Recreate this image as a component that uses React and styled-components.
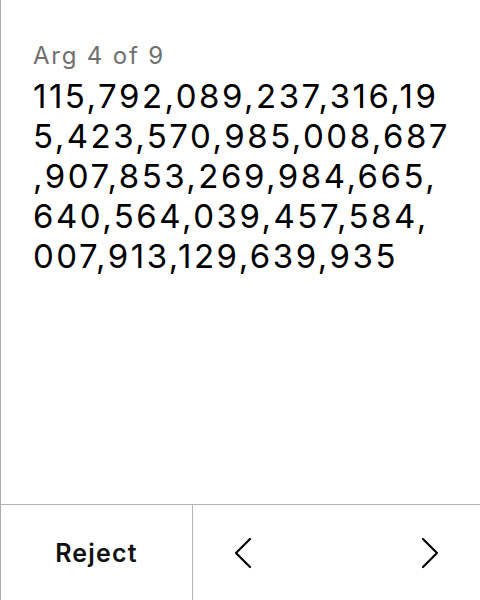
import React from 'react';
import styled, { createGlobalStyle } from 'styled-components';

const GlobalStyle = createGlobalStyle`
  html, body {
    margin: 0;
    padding: 0;
    background: #fff;
  }
  body {
    font-family: Inter, "Noto Sans", sans-serif;
    -webkit-font-smoothing: antialiased;
  }
`

const Screen = styled.div`
  width: 480px;
  height: 600px;
  box-sizing: border-box;
  border-left: 1px solid #aaa;
  display: flex;
  flex-direction: column;
  background: #fff;
`
const Body = styled.div`
  flex: 1;
  padding: 40px 32px 0 32px;
`
const Label = styled.div`
  font-size: 24px;
  line-height: 32px;
  color: #707070;
  letter-spacing: 1.8px;
`
const Value = styled.div`
  margin-top: 4px;
  font-size: 33px;
  line-height: 40px;
  color: #000;
  letter-spacing: 2.5px;
`
const ValueLine = styled.span`
  display: block;
  white-space: nowrap;
`
const Footer = styled.div`
  box-sizing: border-box;
  height: 96px;
  border-top: 1px solid #b4b4b4;
  display: grid;
  grid-template-columns: 192px 1fr;
`
const RejectButton = styled.button`
  border: none;
  border-right: 1px solid #b4b4b4;
  background: none;
  font-family: Inter, sans-serif;
  font-weight: 600;
  font-size: 25px;
  letter-spacing: 1.2px;
  color: #111;
  cursor: pointer;
`
const Nav = styled.div`
  display: flex;
  align-items: center;
  justify-content: space-between;
  padding: 0 34px;
`
const NavButton = styled.button`
  border: none;
  background: none;
  padding: 0;
  width: 32px;
  height: 40px;
  display: flex;
  align-items: center;
  justify-content: center;
  cursor: pointer;
`

const Chevron = ({ dir }) => (
  <svg width="18" height="32" viewBox="0 0 18 32" fill="none">
    <path
      d={dir === 'left' ? 'M16 2 L2 16 L16 30' : 'M2 2 L16 16 L2 30'}
      stroke="#000"
      strokeWidth="2.2"
      strokeLinecap="round"
      strokeLinejoin="round"
    />
  </svg>
)

// the device wraps the raw value character by character at these points
const value = '115,792,089,237,316,195,423,570,985,008,687,907,853,269,984,665,640,564,039,457,584,007,913,129,639,935'
const breaks = [22, 43, 64, 84]

const splitValue = (str, cuts) => {
  const out = []
  let start = 0
  cuts.concat(str.length).forEach(end => {
    out.push(str.slice(start, end))
    start = end
  })
  return out
}

export default function App() {
  return (
    <>
      <GlobalStyle />
      <Screen>
        <Body>
          <Label>Arg 4 of 9</Label>
          <Value>
            {splitValue(value, breaks).map((line, i) => (
              <ValueLine key={i}>{line}</ValueLine>
            ))}
          </Value>
        </Body>
        <Footer>
          <RejectButton>Reject</RejectButton>
          <Nav>
            <NavButton><Chevron dir="left" /></NavButton>
            <NavButton><Chevron dir="right" /></NavButton>
          </Nav>
        </Footer>
      </Screen>
    </>
  )
}
